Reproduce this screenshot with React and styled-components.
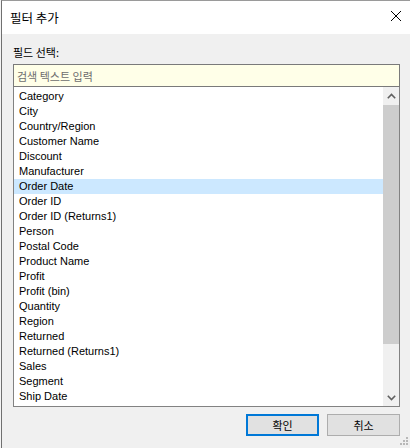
import styled, { createGlobalStyle } from "styled-components";

const Global = createGlobalStyle`
  html, body {
    margin: 0;
    padding: 0;
    background: #f4f4f4;
  }
`;

const Window = styled.div`
  position: relative;
  box-sizing: border-box;
  width: 409px;
  height: 448px;
  margin-left: 1px;

  display: flex;
  flex-direction: column;

  background: #f0f0f0;
  border-top: 1px solid #9a9a9a;
  border-left: 1px solid #707070;
`;

const TitleBar = styled.div`
  height: 33px;
  flex-shrink: 0;

  display: flex;
  align-items: center;
  justify-content: space-between;

  padding: 0 8px 0 8px;
  background: #ffffff;
`;

const Title = styled.span`
  font-family: "Noto Sans CJK KR", sans-serif;
  font-size: 12.5px;
  color: #000;
  margin-top: -1px;
`;

const CloseButton = styled.div`
  width: 10px;
  height: 10px;
  margin-right: 1px;
  margin-top: -3px;
  display: flex;
`;

const Body = styled.div`
  flex: 1;
  display: flex;
  flex-direction: column;
  padding: 11px 10px 0 11px;
`;

const Label = styled.div`
  font-family: "Noto Sans CJK KR", sans-serif;
  font-size: 11px;
  line-height: 15px;
  color: #000;
  margin-bottom: 4px;
`;

const Search = styled.div`
  box-sizing: border-box;
  height: 23px;
  display: flex;
  align-items: center;
  padding-left: 3px;

  background: #ffffe8;
  border: 1px solid #7a7a7a;

  font-family: "Noto Sans CJK KR", sans-serif;
  font-size: 11px;
  color: #6d6d6d;
`;

const ListBox = styled.div`
  box-sizing: border-box;
  height: 320px;
  display: flex;

  background: #ffffff;
  border: 1px solid #828282;
  border-top: none;
`;

const Items = styled.div`
  flex: 1;
  overflow: hidden;
  padding-top: 2px;
`;

const Row = styled.div`
  height: 15px;
  line-height: 15px;
  padding-left: 5px;
  white-space: nowrap;

  font-family: "Liberation Sans", Arial, sans-serif;
  font-size: 11px;
  color: #000;
  background: ${({ $selected }) => ($selected ? "#cce8ff" : "transparent")};
`;

const ScrollBar = styled.div`
  width: 16px;
  display: flex;
  flex-direction: column;
  background: #f0f0f0;
`;

const ArrowButton = styled.div`
  height: 17px;
  flex-shrink: 0;
  display: flex;
  align-items: center;
  justify-content: center;
`;

const Track = styled.div`
  flex: 1;
  padding-top: 1px;
`;

const Thumb = styled.div`
  height: 239px;
  background: #cdcdcd;
`;

const Buttons = styled.div`
  display: flex;
  justify-content: flex-end;
  gap: 8px;
  margin-top: 7px;
`;

const Button = styled.div`
  box-sizing: border-box;
  width: 73px;
  height: 22px;
  display: flex;
  align-items: center;
  justify-content: center;

  background: #e1e1e1;
  border: ${({ $primary }) => ($primary ? "2px solid #0078d7" : "1px solid #adadad")};

  font-family: "Noto Sans CJK KR", sans-serif;
  font-size: 11px;
  color: #000;
`;

const Grip = styled.svg`
  position: absolute;
  right: 1px;
  bottom: 2px;
`;

const fields = [
  "Category",
  "City",
  "Country/Region",
  "Customer Name",
  "Discount",
  "Manufacturer",
  "Order Date",
  "Order ID",
  "Order ID (Returns1)",
  "Person",
  "Postal Code",
  "Product Name",
  "Profit",
  "Profit (bin)",
  "Quantity",
  "Region",
  "Returned",
  "Returned (Returns1)",
  "Sales",
  "Segment",
  "Ship Date",
  "Ship Mode",
];

const Chevron = ({ up }) => (
  <svg width="9" height="6" viewBox="0 0 9 6">
    <path
      d={up ? "M0.8 5.2 L4.5 1.5 L8.2 5.2" : "M0.8 0.8 L4.5 4.5 L8.2 0.8"}
      fill="none"
      stroke="#606060"
      strokeWidth="1.6"
    />
  </svg>
);

const App = () => {
  return (
    <>
      <Global />
      <Window>
        <TitleBar>
          <Title>필터 추가</Title>
          <CloseButton>
            <svg width="10" height="10" viewBox="0 0 10 10">
              <path d="M0 0 L10 10 M10 0 L0 10" stroke="#000" strokeWidth="1" />
            </svg>
          </CloseButton>
        </TitleBar>

        <Body>
          <Label>필드 선택:</Label>
          <Search>검색 텍스트 입력</Search>
          <ListBox>
            <Items>
              {fields.map((f) => (
                <Row key={f} $selected={f === "Order Date"}>
                  {f}
                </Row>
              ))}
            </Items>
            <ScrollBar>
              <ArrowButton>
                <Chevron up />
              </ArrowButton>
              <Track>
                <Thumb />
              </Track>
              <ArrowButton>
                <Chevron />
              </ArrowButton>
            </ScrollBar>
          </ListBox>

          <Buttons>
            <Button $primary>확인</Button>
            <Button>취소</Button>
          </Buttons>
        </Body>

        <Grip width="9" height="9" viewBox="0 0 9 9">
          <g fill="#b8b8b8">
            <rect x="6" y="0" width="2" height="2" />
            <rect x="3" y="3" width="2" height="2" />
            <rect x="6" y="3" width="2" height="2" />
            <rect x="0" y="6" width="2" height="2" />
            <rect x="3" y="6" width="2" height="2" />
            <rect x="6" y="6" width="2" height="2" />
          </g>
        </Grip>
      </Window>
    </>
  );
};

export default App;
